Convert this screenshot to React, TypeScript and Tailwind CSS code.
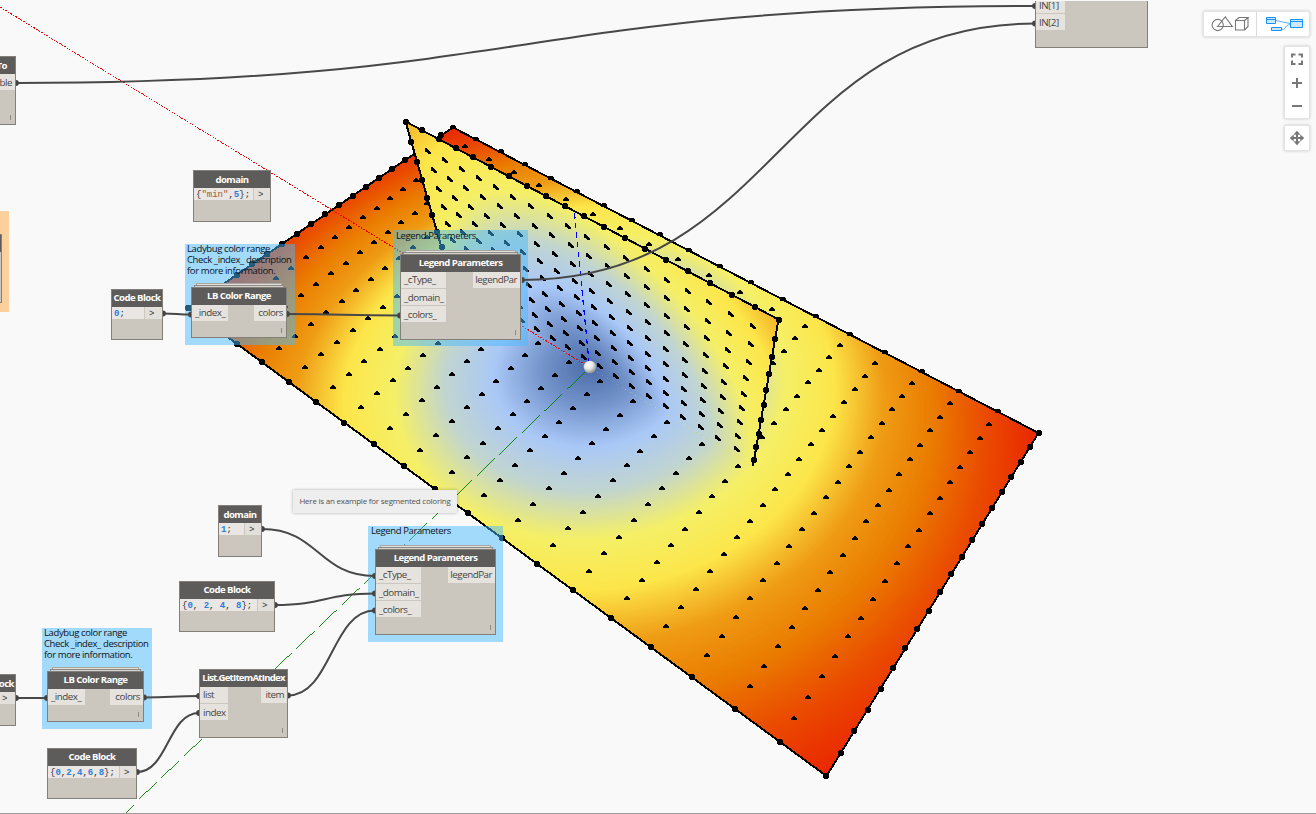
import React from "react";

type Pt = [number, number];

/* ---------- projective mapping of the unit square onto a quad ---------- */
function quadMap(p0: Pt, p1: Pt, p2: Pt, p3: Pt) {
  const dx1 = p1[0] - p2[0];
  const dx2 = p3[0] - p2[0];
  const dx3 = p0[0] - p1[0] + p2[0] - p3[0];
  const dy1 = p1[1] - p2[1];
  const dy2 = p3[1] - p2[1];
  const dy3 = p0[1] - p1[1] + p2[1] - p3[1];
  const det = dx1 * dy2 - dx2 * dy1;
  const g = (dx3 * dy2 - dx2 * dy3) / det;
  const h = (dx1 * dy3 - dx3 * dy1) / det;
  const a = p1[0] - p0[0] + g * p1[0];
  const b = p3[0] - p0[0] + h * p3[0];
  const d = p1[1] - p0[1] + g * p1[1];
  const e = p3[1] - p0[1] + h * p3[1];
  return (x: number, y: number): Pt => {
    const w = g * x + h * y + 1;
    return [(a * x + b * y + p0[0]) / w, (d * x + e * y + p0[1]) / w];
  };
}

const GROUND: [Pt, Pt, Pt, Pt] = [[453, 127.5], [1038.5, 433], [826.5, 776], [188, 308]];
const TILTED: [Pt, Pt, Pt, Pt] = [[405.5, 121.5], [778.5, 319.5], [753, 466], [452, 284]];

const ground = quadMap(...GROUND);
const tilted = quadMap(...TILTED);

const STOPS = [
  [75, 107, 169], [115, 147, 202], [170, 200, 247], [193, 213, 208], [245, 239, 103],
  [252, 230, 74], [239, 156, 21], [234, 123, 0], [234, 74, 0], [234, 38, 0],
];

function ramp(t: number) {
  const i = Math.max(0, Math.min(8, Math.floor(t)));
  const f = Math.max(0, Math.min(1, t - i));
  const c = STOPS[i].map((v, k) => Math.round(v + (STOPS[i + 1][k] - v) * f));
  return `rgb(${c[0]},${c[1]},${c[2]})`;
}

const HALF = 4.025;

function rings(map: (x: number, y: number) => Pt, su: number, max: number, tiltedPlane: boolean) {
  const out: { d: string; fill: string }[] = [];
  const step = 0.045;
  for (let r = max; r > 0; r -= step) {
    let d = "";
    for (let k = 0; k < 72; k++) {
      const th = (k / 72) * Math.PI * 2;
      const u = (r * Math.cos(th)) / su;
      const v = (r * Math.sin(th)) / HALF;
      const p = tiltedPlane ? map((u + 1) / 2, v + 1) : map((u + 1) / 2, (v + 1) / 2);
      d += (k ? "L" : "M") + p[0].toFixed(1) + " " + p[1].toFixed(1);
    }
    out.push({ d: d + "Z", fill: ramp(r - step / 2) });
  }
  return out;
}

const groundRings = rings(ground, HALF * 2, 9, false);
const tiltedRings = rings(tilted, HALF, 5.8, true);

const groundInner: Pt[] = [];
const groundEdge: Pt[] = [];
const groundTop: Pt[] = [];
for (let j = 0; j < 20; j++)
  for (let i = 0; i < 20; i++) {
    const p = ground(i / 19, j / 19);
    if (j === 0 && i < 19) groundTop.push(p);
    else if (i === 0 || i === 19 || j === 0 || j === 19) groundEdge.push(p);
    else groundInner.push(p);
  }
const tiltInner: Pt[] = [];
const tiltEdge: Pt[] = [];
for (let j = 0; j < 10; j++)
  for (let i = 0; i < 20; i++) {
    const p = tilted(i / 19, j / 9.5);
    if (i === 0 || i === 19 || j === 0) tiltEdge.push(p);
    else tiltInner.push(p);
  }

const poly = (q: Pt[]) => q.map((p) => p.join(",")).join(" ");

function marks(points: Pt[], shape: string) {
  return points.map((p) => `M${Math.round(p[0])} ${Math.round(p[1])}${shape}`).join("");
}
const DOME = "m-3 0v-2h1v-1h1v-1h2v1h1v1h1v2z";
const TOP = "m-3 1v-3h1v-1h4v1h1v3z";
const SLANT = "m-2 -3h2v1h1v1h1v1h1v1h1v2h-3v-1h-1v-1h-2z";
const BALL = "m-2 -3h4v1h1v4h-1v1h-4v-1h-1v-4h1z";

function Scene() {
  const [E, F, MR, ML] = TILTED;
  return (
    <svg className="absolute left-0 top-0" width="1316" height="814" viewBox="0 0 1316 814">
      <defs>
        <clipPath id="ground"><polygon points={poly(GROUND)} /></clipPath>
        <clipPath id="tilted"><polygon points={poly(TILTED)} /></clipPath>
        <radialGradient id="ball" cx="0.38" cy="0.32" r="0.7">
          <stop offset="0" stopColor="#ffffff" />
          <stop offset="0.5" stopColor="#e4e4e4" />
          <stop offset="1" stopColor="#8d8d8d" />
        </radialGradient>
      </defs>
      <g clipPath="url(#ground)">
        <polygon points={poly(GROUND)} fill="rgb(234,38,0)" />
        {groundRings.map((r, i) => <path key={i} d={r.d} fill={r.fill} />)}
      </g>
      <g shapeRendering="crispEdges">
        <polygon points={poly(GROUND)} fill="none" stroke="#000" strokeWidth="2" />
        <path d={marks(groundInner, DOME) + marks(groundTop, TOP)} />
        <path d={marks(groundEdge, BALL)} />
      </g>
      <g clipPath="url(#tilted)">
        {tiltedRings.map((r, i) => <path key={i} d={r.d} fill={r.fill} />)}
      </g>
      <g shapeRendering="crispEdges">
        <polyline points={poly([ML, E, F, MR])} fill="none" stroke="#000" strokeWidth="2" />
        <path d={marks(tiltInner, SLANT)} />
        <path d={marks(tiltEdge, BALL)} />
        <path d="M0 7L589 367" stroke="#f00000" strokeWidth="1" strokeDasharray="1.8 1.2" />
        <path d="M585 372.2L123.5 814" stroke="#008000" strokeWidth="0.9" strokeDasharray="25 6.2" />
        <path d="M574.5 213L589 362" stroke="#0000ff" strokeWidth="1.2" strokeDasharray="5.5 4.2" />
      </g>
      <circle cx="590" cy="367" r="6.3" fill="url(#ball)" />
    </svg>
  );
}

/* ---------------------------- connectors ---------------------------- */
const WIRES: [number, number, number, number][] = [
  [16, 83, 1035, 6],
  [522, 280, 1035, 23.5],
  [163, 313.5, 191, 314.5],
  [287, 314, 400, 315.5],
  [262, 529, 375, 576],
  [275, 605, 375, 593.5],
  [288, 695.5, 375, 610.5],
  [137, 772, 199, 713],
  [144, 697.5, 199, 696],
  [16, 698, 47, 698],
];

function Wires() {
  return (
    <svg className="absolute left-0 top-0" width="1316" height="814" viewBox="0 0 1316 814">
      {WIRES.map(([x1, y1, x2, y2], i) => {
        const m = (x1 + x2) / 2;
        return (
          <g key={i}>
            <path d={`M${x1} ${y1}C${m} ${y1} ${m} ${y2} ${x2} ${y2}`} fill="none" stroke="#484848" strokeWidth="2" />
            <path d={`M${x1} ${y1 - 2.9}a2.9 2.9 0 0 1 0 5.8zM${x2} ${y2 - 2.9}a2.9 2.9 0 0 0 0 5.8z`} fill="#444" />
          </g>
        );
      })}
    </svg>
  );
}

/* ------------------------------ nodes ------------------------------ */
function Node({ at, title, children, stacked }: { at: string; title: React.ReactNode; children?: React.ReactNode; stacked?: boolean }) {
  return (
    <div className={`absolute ${at}`}>
      {stacked && (
        <>
          <div className="absolute -top-[4px] left-[5px] right-[5px] h-[4px] border-t border-x border-[#a9a7a3] bg-[#e2dfda]" />
          <div className="absolute -top-[2px] left-[3px] right-[3px] h-[2px] border-t border-x border-[#8e8b87] bg-[#d5d1ca]" />
        </>
      )}
      <div className="relative flex h-full w-full flex-col overflow-hidden border border-[#83807b] bg-[#cbc6be]">
        <div className="-mx-px -mt-px flex h-[18px] shrink-0 items-center justify-center whitespace-nowrap bg-[#5e5c5a] text-[9.6px] font-bold tracking-[-0.55px] text-white">
          {title}
        </div>
        {children}
      </div>
    </div>
  );
}

function Port({ children, w }: { children: React.ReactNode; w: string }) {
  return <div className={`flex h-[16px] items-center whitespace-nowrap bg-[#e6e3df] px-[3px] pt-[1px] text-[9.8px] tracking-[-0.5px] text-[#444] ${w}`}>{children}</div>;
}

function Ports({ left, right, lw, rw, plain }: { left: string[]; right?: string; lw: string; rw?: string; plain?: boolean }) {
  return (
    <div className="flex flex-1 items-start justify-between">
      <div className="flex flex-col gap-px">
        {left.map((l, i) => <Port key={l} w={`${lw} ${i || plain ? "pt-[3px]" : ""}`}>{l}</Port>)}
      </div>
      {right && <Port w={`justify-end ${rw}`}>{right}</Port>}
      {!plain && <span className="absolute bottom-[4px] right-[4px] h-[5px] w-px bg-[#8d8a86]" />}
    </div>
  );
}

function CodeRow({ children, tail }: { children: React.ReactNode; tail: string }) {
  return (
    <div className="flex h-[12px] shrink-0 gap-px font-['Liberation_Mono',monospace] text-[9px] leading-[14px] text-[#333]">
      <div className="flex-1 whitespace-pre bg-[#e9e6e3] pl-[2px]">{children}</div>
      <div className={`bg-[#e3e0dc] pl-[4px] ${tail}`}>&gt;</div>
    </div>
  );
}

const N = ({ children }: { children: React.ReactNode }) => <b className="text-[#2b7fdc]">{children}</b>;

function Group({ at, children }: { at: string; children: React.ReactNode }) {
  return (
    <div className={`absolute flex items-start whitespace-pre bg-[rgba(72,185,255,0.49)] pl-[2px] text-[9.5px] leading-[11px] tracking-[-0.38px] text-[#0c1218] ${at}`}>
      <div className="-mt-px">{children}</div>
    </div>
  );
}

const box = "rounded-[2px] border border-[#e4e4e4] bg-white shadow-[0_0_3px_rgba(0,0,0,0.22)]";

export default function App() {
  return (
    <div className="relative h-[814px] w-[1316px] overflow-hidden bg-[#f9f9f9] font-['Open_Sans',sans-serif]">
      <Scene />

      <Group at="left-[185px] top-[244px] w-[110px] h-[101px]">{"Ladybug color range\nCheck _index_ description\nfor more information."}</Group>
      <Group at="left-[393px] top-[230px] w-[135px] h-[116px] pl-[3px] pt-[1px]">Legend Parameters</Group>
      <Group at="left-[368px] top-[526px] w-[135px] h-[116px] pl-[3px]">Legend Parameters</Group>
      <Group at="left-[42px] top-[628px] w-[110px] h-[101px]">{"Ladybug color range\nCheck _index_ description\nfor more information."}</Group>
      <div className="absolute left-0 top-[211px] h-[101px] w-[9px] bg-[#fcd09c]" />

      <Wires />

      <Node at="left-[-60px] top-[56px] w-[76px] h-[69px]" title={<span className="w-full pr-[9px] pt-[2px] text-right">To</span>}>
        <Ports left={[]} right="ble" lw="" rw="w-[74px] pt-[3px]" />
      </Node>
      <Node at="left-[-60px] top-[234px] w-[62px] h-[69px]" title="" />

      <Node at="left-[193px] top-[170px] w-[78px] h-[52px]" title={<span className="pt-[2px]">domain</span>}>
        <CodeRow tail="w-[16px]">{"{"}<span className="text-[#9c5a3c]">"min"</span>,<N>5</N>{"};"}</CodeRow>
      </Node>
      <Node at="left-[111px] top-[289px] w-[52px] h-[51px]" title="Code Block">
        <CodeRow tail="w-[17px]"><N>0</N>;</CodeRow>
      </Node>
      <Node at="left-[191px] top-[287px] w-[96px] h-[51px]" title="LB Color Range" stacked>
        <Ports left={["_index_"]} right="colors" lw="w-[36px]" rw="w-[32px]" />
      </Node>
      <Node at="left-[400px] top-[254px] w-[121px] h-[86px]" title="Legend Parameters" stacked>
        <Ports left={["_cType_", "_domain_", "_colors_"]} right="legendPar" lw="w-[45px]" rw="w-[47px]" />
      </Node>

      <Node at="left-[218px] top-[505px] w-[44px] h-[52px]" title={<span className="pt-[2px]">domain</span>}>
        <CodeRow tail="w-[16px]"><N>1</N>;</CodeRow>
      </Node>
      <Node at="left-[179px] top-[581px] w-[96px] h-[51px]" title="Code Block">
        <CodeRow tail="w-[16px]">{"{"}<N>0</N>, <N>2</N>, <N>4</N>, <N>8</N>{"};"}</CodeRow>
      </Node>
      <Node at="left-[375px] top-[549px] w-[121px] h-[86px]" title="Legend Parameters" stacked>
        <Ports left={["_cType_", "_domain_", "_colors_"]} right="legendPar" lw="w-[45px]" rw="w-[47px]" />
      </Node>

      <Node at="left-[-60px] top-[674px] w-[76px] h-[52px]" title={<span className="w-full pr-[2px] pt-[2px] text-right">Code Block</span>}>
        <CodeRow tail="w-[17px]"> </CodeRow>
      </Node>
      <Node at="left-[47px] top-[671px] w-[97px] h-[51px]" title="LB Color Range" stacked>
        <Ports left={["_index_"]} right="colors" lw="w-[37px]" rw="w-[33px]" />
      </Node>
      <Node at="left-[199px] top-[669px] w-[89px] h-[69px]" title={<span className="tracking-[-0.75px]">List.GetItemAtIndex</span>}>
        <Ports left={["list", "index"]} right="item" lw="w-[28px]" rw="w-[26px]" />
      </Node>
      <Node at="left-[47px] top-[748px] w-[90px] h-[51px]" title="Code Block">
        <CodeRow tail="w-[16px]">{"{"}<N>0</N>,<N>2</N>,<N>4</N>,<N>6</N>,<N>8</N>{"};"}</CodeRow>
      </Node>

      <Node at="left-[1035px] top-[-21px] w-[113px] h-[69px]" title="">
        <Ports left={["IN[1]", "IN[2]"]} lw="w-[29px]" plain />
      </Node>

      <div className="absolute left-[293px] top-[490px] flex h-[23px] w-[164px] items-center justify-center whitespace-nowrap bg-[#eeeeee] pb-[1px] text-[8px] tracking-[-0.22px] text-[#505050] shadow-[0_0_3px_rgba(0,0,0,0.3)]">
        Here is an example for segmented coloring
      </div>

      <div className={`absolute left-[1203px] top-[11px] flex h-[26px] w-[107px] ${box}`}>
        <div className="w-[53px] border-r border-[#dcdcdc]">
          <svg width="52" height="24" viewBox="1204 12 52 24" fill="none" stroke="#777" strokeWidth="1.1">
            <circle cx="1217.7" cy="25" r="5.6" />
            <path d="M1217.5 26.5L1225.3 17L1232.3 26.5Z" />
            <path d="M1235.5 20.5h9v9.5h-9zM1235.5 20.5l3.5-3h9l-3.5 3M1248 17.5v9l-3.5 3.5" />
          </svg>
        </div>
        <svg width="52" height="24" viewBox="1257 12 52 24" fill="#cfe7fb" stroke="#1294f6" strokeWidth="1">
          <path d="M1275.5 20.5L1290 23.5M1281.5 29.5C1287 29.5 1284 25.5 1290 24.5" fill="none" stroke="#55b1f7" />
          <path d="M1266.5 17.5h9v6h-9zM1266.5 19.5h9M1271.5 27.5h10v3h-10zM1290.5 19.5h12v8h-12zM1290.5 21.5h12" />
        </svg>
      </div>
      <div className={`absolute left-[1284px] top-[46px] h-[73px] w-[26px] ${box}`}>
        <svg width="24" height="71" viewBox="1285 47 24 71" fill="none" stroke="#777" strokeWidth="2">
          <path d="M1292 57.5v-3h3.5M1298.5 54.5h3.5v3M1302 60.5v3.5h-3.5M1295.5 64h-3.5v-3.5M1292 83h10M1297 78v10M1292 106h10" />
        </svg>
      </div>
      <div className={`absolute left-[1284px] top-[125px] h-[26px] w-[26px] ${box}`}>
        <svg width="24" height="24" viewBox="1285 126 24 24" fill="#777" stroke="#777">
          <path d="M1291 138h12M1297 132v12" strokeWidth="2" />
          <path d="M1297 131l3 3.5h-6zM1297 145l3-3.5h-6zM1290 138l3.5-3v6zM1304 138l-3.5-3v6z" strokeWidth="0.5" />
        </svg>
      </div>

      <div className="absolute left-0 top-0 h-px w-full bg-[#f9f9f9]" />
      <div className="absolute bottom-0 left-0 h-px w-full bg-[#9b9b9b]" />
    </div>
  );
}
